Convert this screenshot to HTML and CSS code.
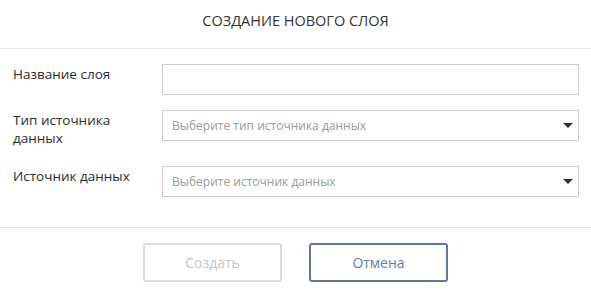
FILE: index.html
```html
<!DOCTYPE html>
<html lang="ru">
<head>
    <meta charset="UTF-8">
    <title>Создание нового слоя</title>
    <link rel="stylesheet" href="styles.css">
</head>
<body>

<div class="dialog">
    <div class="dialog-header">Создание нового слоя</div>

    <div class="dialog-body">
        <div class="row">
            <label for="name">Название слоя</label>
            <input type="text" id="name">
        </div>
        <div class="row">
            <label for="type">Тип источника данных</label>
            <div class="select" id="type">
                <span>Выберите тип источника данных</span>
                <i class="caret"></i>
            </div>
        </div>
        <div class="row">
            <label for="source">Источник данных</label>
            <div class="select" id="source">
                <span>Выберите источник данных</span>
                <i class="caret"></i>
            </div>
        </div>
    </div>

    <div class="dialog-footer">
        <button class="btn" disabled>Создать</button>
        <button class="btn btn-primary">Отмена</button>
    </div>
</div>

</body>
</html>
```
FILE: styles.css
```css
body {
    margin: 0;
    background: #fff;
    font-family: "Open Sans", Arial, sans-serif;
    color: #333;
}
.dialog {
    width: 591px;
}
.dialog-header {
    height: 48px;
    line-height: 42px;
    text-align: center;
    font-size: 14.5px;
    text-transform: uppercase;
    color: #333;
    border-bottom: 1px solid #e5e5e5;
}
.dialog-body {
    padding: 15px 12px 15px 13px;
    border-bottom: 1px solid #e5e5e5;
}
.row {
    display: flex;
    align-items: flex-start;
    margin-bottom: 15px;
}
label {
    width: 128px;
    flex: none;
    padding: 1px 21px 4px 0;
    font-size: 13.5px;
    line-height: 18px;
    color: #2b2b2b;
}
input[type="text"], .select {
    flex: 1;
    box-sizing: border-box;
    height: 31px;
    margin: 0;
    border: 1px solid #ccc;
    background: #fff;
    font-family: inherit;
}
.select {
    display: flex;
    align-items: center;
    justify-content: space-between;
    padding: 0 5px 0 9px;
    font-size: 12px;
    color: #999;
}
.caret {
    width: 0;
    height: 0;
    border-left: 5px solid transparent;
    border-right: 5px solid transparent;
    border-top: 5px solid #333;
}
.dialog-footer {
    display: flex;
    justify-content: center;
    gap: 27px;
    padding: 15px 0 12px;
}
.btn {
    width: 139px;
    height: 39px;
    border: 2px solid #dcdcdc;
    border-radius: 3px;
    background: #fff;
    font-family: inherit;
    font-size: 14px;
    color: #c4c4c4;
}
.btn-primary {
    border-color: #5b79a3;
    color: #5a7db3;
    cursor: pointer;
}
```
